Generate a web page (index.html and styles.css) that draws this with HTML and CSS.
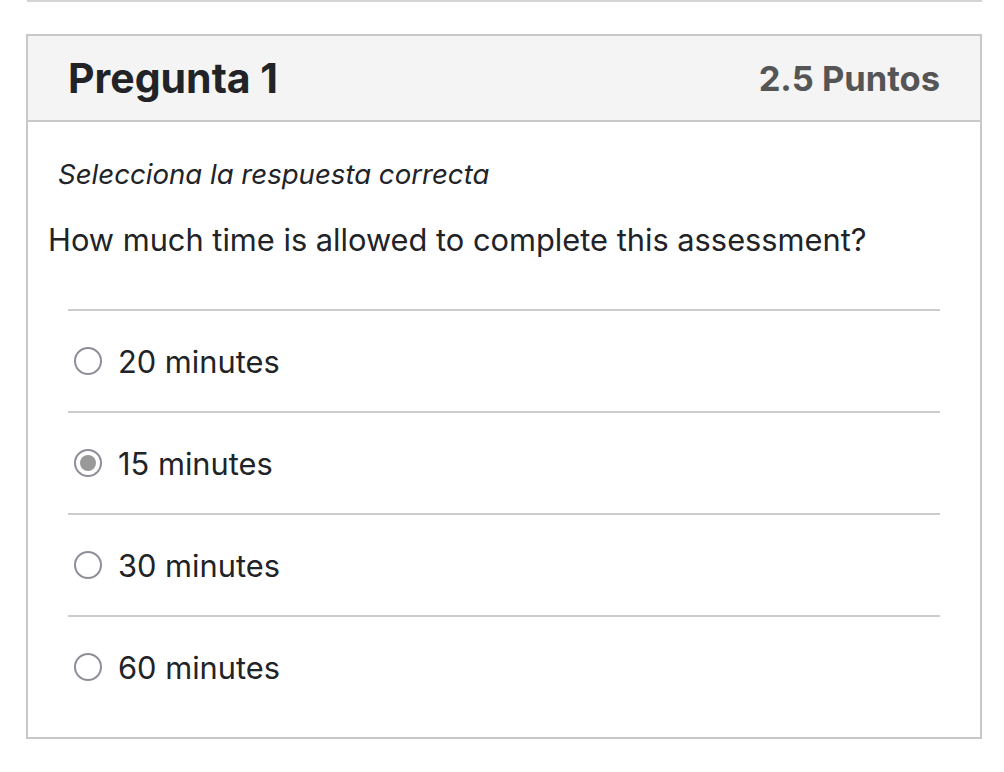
FILE: index.html
```html
<!DOCTYPE html>
<html>
<head>
<meta charset="utf-8">
<link rel="stylesheet" href="styles.css">
</head>
<body>
<div class="topline"></div>
<section class="card">
  <header class="card-header">
    <h2 class="title">Pregunta 1</h2>
    <span class="points">2.5 Puntos</span>
  </header>
  <div class="card-body">
    <p class="instruction">Selecciona la respuesta correcta</p>
    <p class="question">How much time is allowed to complete this assessment?</p>
    <ul class="options">
      <li class="option"><span class="radio"></span><span class="label">20 minutes</span></li>
      <li class="option"><span class="radio checked"></span><span class="label">15 minutes</span></li>
      <li class="option"><span class="radio"></span><span class="label">30 minutes</span></li>
      <li class="option"><span class="radio"></span><span class="label">60 minutes</span></li>
    </ul>
  </div>
</section>
</body>
</html>
```
FILE: styles.css
```css
html, body {
  margin: 0;
  padding: 0;
  background: #ffffff;
}
body {
  font-family: Inter, "Liberation Sans", sans-serif;
  color: #212327;
}
.topline {
  height: 2px;
  margin: 0 22px 0 27px;
  background: #d4d4d4;
}
.card {
  margin: 32px 22px 0 26px;
  border: 2px solid #c8c8c8;
  height: 705px;
  box-sizing: border-box;
}
.card-header {
  height: 84px;
  display: flex;
  align-items: center;
  justify-content: space-between;
  padding: 0 40px;
  background: #f4f4f4;
  border-bottom: 2px solid #c8c8c8;
}
.title {
  margin: 0;
  font-size: 41px;
  font-weight: 700;
  color: #212327;
}
.points {
  font-size: 34.5px;
  font-weight: 700;
  color: #555555;
}
.card-body {
  padding: 36px 40px 0 20px;
}
.instruction {
  margin: 0 0 0 10px;
  font-size: 27.6px;
  line-height: 32px;
  font-style: italic;
}
.question {
  margin: 32px 0 0 0;
  font-size: 30.8px;
  line-height: 36px;
}
.options {
  list-style: none;
  margin: 51px 0 0 20px;
  padding: 0;
}
.option {
  display: flex;
  align-items: center;
  height: 102px;
  border-top: 2px solid #cccccc;
  box-sizing: border-box;
  padding-left: 6px;
}
.radio {
  width: 28px;
  height: 28px;
  box-sizing: border-box;
  border: 2px solid #908d99;
  border-radius: 50%;
  margin-right: 16px;
  display: flex;
  align-items: center;
  justify-content: center;
}
.radio.checked::after {
  content: "";
  width: 16px;
  height: 16px;
  border-radius: 50%;
  background: #999999;
}
.label {
  font-size: 30.8px;
}
```
